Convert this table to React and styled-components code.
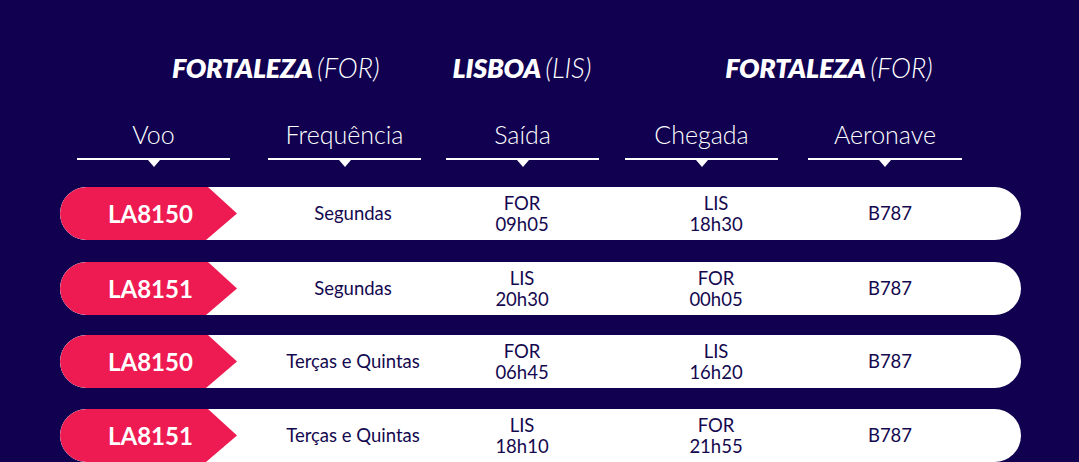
import React from "react";
import styled, { createGlobalStyle } from "styled-components";

const Global = createGlobalStyle`
  html, body { margin: 0; padding: 0; background: #10004f; }
  body { font-family: "Lato", "Noto Sans", sans-serif; }
`;

const Page = styled.div`
  width: 1079px;
  height: 462px;
  background: #10004f;
  overflow: hidden;
  padding-top: 46px;
  box-sizing: border-box;
`;

const Titles = styled.div`
  display: flex;
  height: 42px;
  align-items: center;
`;

const Title = styled.div`
  width: ${p => p.$w}px;
  margin-left: ${p => p.$ml}px;
  text-align: center;
  color: #fff;
  font-size: 27px;
  font-style: italic;
  font-weight: 800;
  letter-spacing: -0.3px;
  white-space: nowrap;
  span { font-weight: 300; letter-spacing: 0; }
`;

const Heads = styled.div`
  display: flex;
  margin-top: 31px;
  padding-left: 77px;
`;

const Head = styled.div`
  width: ${p => p.$w || 153}px;
  margin-left: ${p => p.$ml || 0}px;
  position: relative;
  text-align: center;
  color: #fff;
  font-size: 25px;
  font-weight: 300;
  line-height: 30px;
  padding-bottom: 9px;
  border-bottom: 2px solid #fff;
  &::after {
    content: "";
    position: absolute;
    left: 50%;
    bottom: -9px;
    transform: translateX(-50%);
    border-left: 6px solid transparent;
    border-right: 6px solid transparent;
    border-top: 7px solid #fff;
  }
`;

const Rows = styled.div`
  display: flex;
  flex-direction: column;
  margin-top: 27px;
  padding-left: 60px;
`;

const Row = styled.div`
  width: 961px;
  height: 53px;
  background: #fff;
  border-radius: 27px;
  display: grid;
  grid-template-columns: 178px 230px 108px 280px 68px;
  align-items: center;
  color: #14094f;
  font-size: 18.5px;
  line-height: 21px;
  overflow: hidden;
  margin-bottom: ${p => p.$mb || 0}px;
`;

const Badge = styled.div`
  height: 53px;
  background: #ee1a52;
  color: #fff;
  font-weight: 700;
  font-size: 24px;
  display: flex;
  align-items: center;
  padding-left: 48px;
  clip-path: polygon(0 0, 148px 0, 177px 50%, 146px 100%, 0 100%);
  border-radius: 27px 0 0 27px;
`;

const Cell = styled.div`
  text-align: center;
  white-space: nowrap;
`;

const rows = [
  { v: "LA8150", f: "Segundas", s: ["FOR", "09h05"], c: ["LIS", "18h30"], a: "B787", mb: 22 },
  { v: "LA8151", f: "Segundas", s: ["LIS", "20h30"], c: ["FOR", "00h05"], a: "B787", mb: 20 },
  { v: "LA8150", f: "Terças e Quintas", s: ["FOR", "06h45"], c: ["LIS", "16h20"], a: "B787", mb: 21 },
  { v: "LA8151", f: "Terças e Quintas", s: ["LIS", "18h10"], c: ["FOR", "21h55"], a: "B787", mb: 0 },
];

export default function App() {
  return (
    <Page>
      <Global />
      <Titles>
        <Title $ml={172} $w={206}>FORTALEZA <span>(FOR)</span></Title>
        <Title $ml={72} $w={144}>LISBOA <span>(LIS)</span></Title>
        <Title $ml={128} $w={214}>FORTALEZA <span>(FOR)</span></Title>
      </Titles>
      <Heads>
        <Head>Voo</Head>
        <Head $ml={38}>Frequência</Head>
        <Head $ml={25}>Saída</Head>
        <Head $ml={26}>Chegada</Head>
        <Head $ml={30} $w={154}>Aeronave</Head>
      </Heads>
      <Rows>
        {rows.map((r, i) => (
          <Row key={i} $mb={r.mb}>
            <Badge>{r.v}</Badge>
            <Cell>{r.f}</Cell>
            <Cell>{r.s[0]}<br />{r.s[1]}</Cell>
            <Cell>{r.c[0]}<br />{r.c[1]}</Cell>
            <Cell>{r.a}</Cell>
          </Row>
        ))}
      </Rows>
    </Page>
  );
}
